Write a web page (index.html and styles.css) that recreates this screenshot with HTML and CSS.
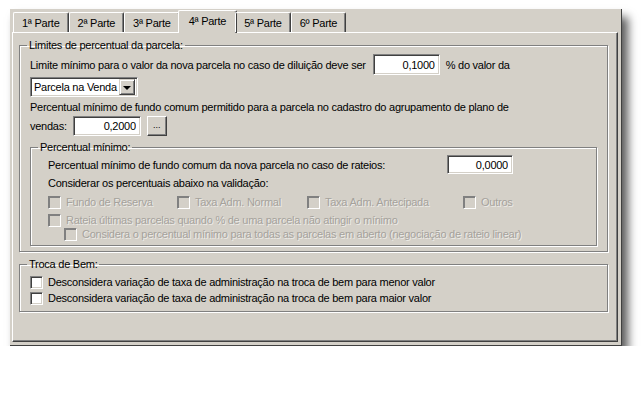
FILE: index.html
```html
<!DOCTYPE html>
<html lang="pt-BR">

<head>
    <meta charset="UTF-8">
    <title>Parâmetros - 4ª Parte</title>
    <link rel="stylesheet" href="styles.css">
</head>

<body>
    <div class="window">
        <div class="tabs">
            <div class="tab">1ª Parte</div>
            <div class="tab">2ª Parte</div>
            <div class="tab">3ª Parte</div>
            <div class="tab active">4ª Parte</div>
            <div class="tab">5ª Parte</div>
            <div class="tab">6º Parte</div>
        </div>

        <div class="panel">
            <fieldset class="group">
                <legend>Limites de percentual da parcela:</legend>
                <div class="group-body">
                    <div class="row row-first">
                        <span>Limite mínimo para o valor da nova parcela no caso de diluição deve ser</span>
                        <input class="edit edit-tall" type="text" value="0,1000">
                        <span>% do valor da</span>
                    </div>

                    <div class="row row-combo">
                        <div class="combo">
                            <span class="combo-text">Parcela na Venda</span>
                            <span class="combo-btn"><span class="arrow"></span></span>
                        </div>
                    </div>

                    <div class="line line-fundo">Percentual mínimo de fundo comum permitido para a parcela no cadastro do agrupamento de plano de</div>

                    <div class="row row-vendas">
                        <span>vendas:</span>
                        <input class="edit edit-vendas" type="text" value="0,2000">
                        <button class="dots" type="button">...</button>
                    </div>

                    <fieldset class="group group-inner">
                        <legend>Percentual mínimo:</legend>
                        <div class="inner-body">
                            <div class="row row-rateio">
                                <span class="label-wide">Percentual mínimo de fundo comum da nova parcela no caso de rateios:</span>
                                <input class="edit edit-rateio" type="text" value="0,0000">
                            </div>
                            <div class="line line-considerar">Considerar os percentuais abaixo na validação:</div>

                            <div class="check-grid">
                                <label class="check disabled"><span class="box"></span>Fundo de Reserva</label>
                                <label class="check disabled"><span class="box"></span>Taxa Adm. Normal</label>
                                <label class="check disabled"><span class="box"></span>Taxa Adm. Antecipada</label>
                                <label class="check disabled"><span class="box"></span>Outros</label>
                            </div>
                            <label class="check disabled check-rateia"><span class="box"></span>Rateia últimas parcelas quando % de uma parcela não atingir o mínimo</label>
                            <label class="check disabled check-sub"><span class="box"></span>Considera o percentual mínimo para todas as parcelas em aberto (negociação de rateio linear)</label>
                        </div>
                    </fieldset>
                </div>
            </fieldset>

            <fieldset class="group group-troca">
                <legend>Troca de Bem:</legend>
                <div class="troca-body">
                    <label class="check"><span class="box"></span>Desconsidera variação de taxa de administração na troca de bem para menor valor</label>
                    <label class="check"><span class="box"></span>Desconsidera variação de taxa de administração na troca de bem para maior valor</label>
                </div>
            </fieldset>
        </div>
    </div>
</body>

</html>
```

FILE: styles.css
```css
body {
    margin: 0;
    background-color: #fff;
    font-family: 'Liberation Sans', Arial, sans-serif;
    font-size: 11px;
    letter-spacing: -0.25px;
    color: #000;
}

.window {
    box-sizing: border-box;
    width: 612px;
    height: 337px;
    margin: 9px 0 0 10px;
    padding: 1px 3px 3px 2px;
    display: flex;
    flex-direction: column;
    background-color: #d4d0c8;
    border-right: 1px solid #404040;
    border-bottom: 1px solid #404040;
    box-shadow: 6px 8px 9px rgba(0, 0, 0, 0.65);
}

/* tab strip */
.tabs {
    display: flex;
    align-items: flex-end;
    height: 22px;
    padding-left: 1px;
    position: relative;
    z-index: 1;
}

.tab {
    box-sizing: border-box;
    height: 20px;
    padding: 0 8px;
    line-height: 20px;
    border-top: 1px solid #fff;
    border-left: 1px solid #fff;
    border-right: 1px solid #404040;
    box-shadow: inset -1px 0 #808080;
    border-radius: 2px 2px 0 0;
    white-space: nowrap;
}

.tab.active {
    height: 23px;
    margin: 0 -2px -1px;
    padding: 0 10px;
    line-height: 20px;
    background-color: #d4d0c8;
}

.panel {
    flex: 1;
    padding: 6px 9px 0 6px;
    border-top: 1px solid #fff;
    border-left: 1px solid #fff;
    border-right: 1px solid #404040;
    border-bottom: 1px solid #404040;
    box-shadow: inset -1px -1px #808080;
}

/* group boxes */
.group {
    margin: 0;
    padding: 0;
    min-width: 0;
    border: 1px solid #808080;
    box-shadow: inset 1px 1px #fff, 1px 1px #fff;
}

.group legend {
    margin-left: 7px;
    padding: 0 2px;
    line-height: 13px;
}

.group-body {
    padding: 2px 10px 5px;
}

.row {
    display: flex;
    align-items: center;
    white-space: nowrap;
}

.row-first {
    height: 21px;
}

.row-combo {
    margin-top: 2px;
}

.line {
    height: 14px;
    line-height: 14px;
    white-space: nowrap;
}

.line-fundo {
    margin-top: 3px;
}

.row-vendas {
    margin-top: 2px;
    height: 20px;
}

/* edits */
.edit {
    box-sizing: border-box;
    margin: 0;
    padding: 0 4px 0 0;
    font: inherit;
    letter-spacing: inherit;
    text-align: right;
    background-color: #fff;
    border-top: 1px solid #808080;
    border-left: 1px solid #808080;
    border-right: 1px solid #fff;
    border-bottom: 1px solid #fff;
    box-shadow: inset 1px 1px #404040, inset -1px -1px #d4d0c8;
    outline: none;
}

.edit-tall {
    width: 67px;
    height: 21px;
    margin: 0 6px 0 7px;
}

.edit-vendas {
    width: 68px;
    height: 20px;
    margin-left: 6px;
}

.edit-rateio {
    width: 66px;
    height: 19px;
}

.dots {
    box-sizing: border-box;
    width: 20px;
    height: 20px;
    margin-left: 6px;
    padding: 0 0 3px;
    font: inherit;
    font-size: 9px;
    line-height: 14px;
    background-color: #d4d0c8;
    border-top: 1px solid #fff;
    border-left: 1px solid #fff;
    border-right: 1px solid #404040;
    border-bottom: 1px solid #404040;
    box-shadow: inset -1px -1px #808080;
}

/* combo box */
.combo {
    box-sizing: border-box;
    display: flex;
    align-items: center;
    width: 108px;
    height: 20px;
    background-color: #fff;
    border-top: 1px solid #808080;
    border-left: 1px solid #808080;
    border-right: 1px solid #fff;
    border-bottom: 1px solid #fff;
    box-shadow: inset 1px 1px #404040, inset -1px -1px #d4d0c8;
    padding: 2px;
}

.combo-text {
    flex: 1;
    padding-left: 1px;
    white-space: nowrap;
}

.combo-btn {
    box-sizing: border-box;
    width: 16px;
    height: 16px;
    display: flex;
    align-items: center;
    justify-content: center;
    background-color: #d4d0c8;
    border-top: 1px solid #d4d0c8;
    border-left: 1px solid #d4d0c8;
    border-right: 1px solid #404040;
    border-bottom: 1px solid #404040;
    box-shadow: inset 1px 1px #fff, inset -1px -1px #808080;
}

.arrow {
    width: 0;
    height: 0;
    border-left: 4px solid transparent;
    border-right: 4px solid transparent;
    border-top: 4px solid #000;
    margin-top: 1px;
}

/* inner group */
.group-inner {
    margin-top: 5px;
}

.inner-body {
    padding: 0 10px 4px 17px;
}

.row-rateio {
    height: 19px;
    margin-top: 1px;
}

.label-wide {
    width: 399px;
}

.line-considerar {
    margin-top: 2px;
}

/* check boxes */
.check {
    display: flex;
    align-items: center;
    height: 14px;
    white-space: nowrap;
}

.box {
    box-sizing: border-box;
    flex: none;
    width: 13px;
    height: 13px;
    margin-right: 5px;
    background-color: #fff;
    border-top: 1px solid #808080;
    border-left: 1px solid #808080;
    border-right: 1px solid #fff;
    border-bottom: 1px solid #fff;
    box-shadow: inset 1px 1px #404040, inset -1px -1px #d4d0c8;
}

.check.disabled {
    color: #a5a29c;
    text-shadow: 1px 1px 0 rgba(255, 255, 255, 0.6);
}

.check.disabled .box {
    background-color: #d4d0c8;
    box-shadow: inset 1px 1px #808080, inset -1px -1px #d4d0c8;
}

.check-grid {
    display: grid;
    grid-template-columns: 129px 130px 156px auto;
    margin-top: 5px;
}

.check-rateia {
    margin-top: 4px;
}

.check-sub {
    padding-left: 16px;
}

/* troca de bem */
.group-troca {
    margin-top: 6px;
}

.troca-body {
    display: flex;
    flex-direction: column;
    gap: 2px;
    padding: 4px 10px 6px;
}
```
